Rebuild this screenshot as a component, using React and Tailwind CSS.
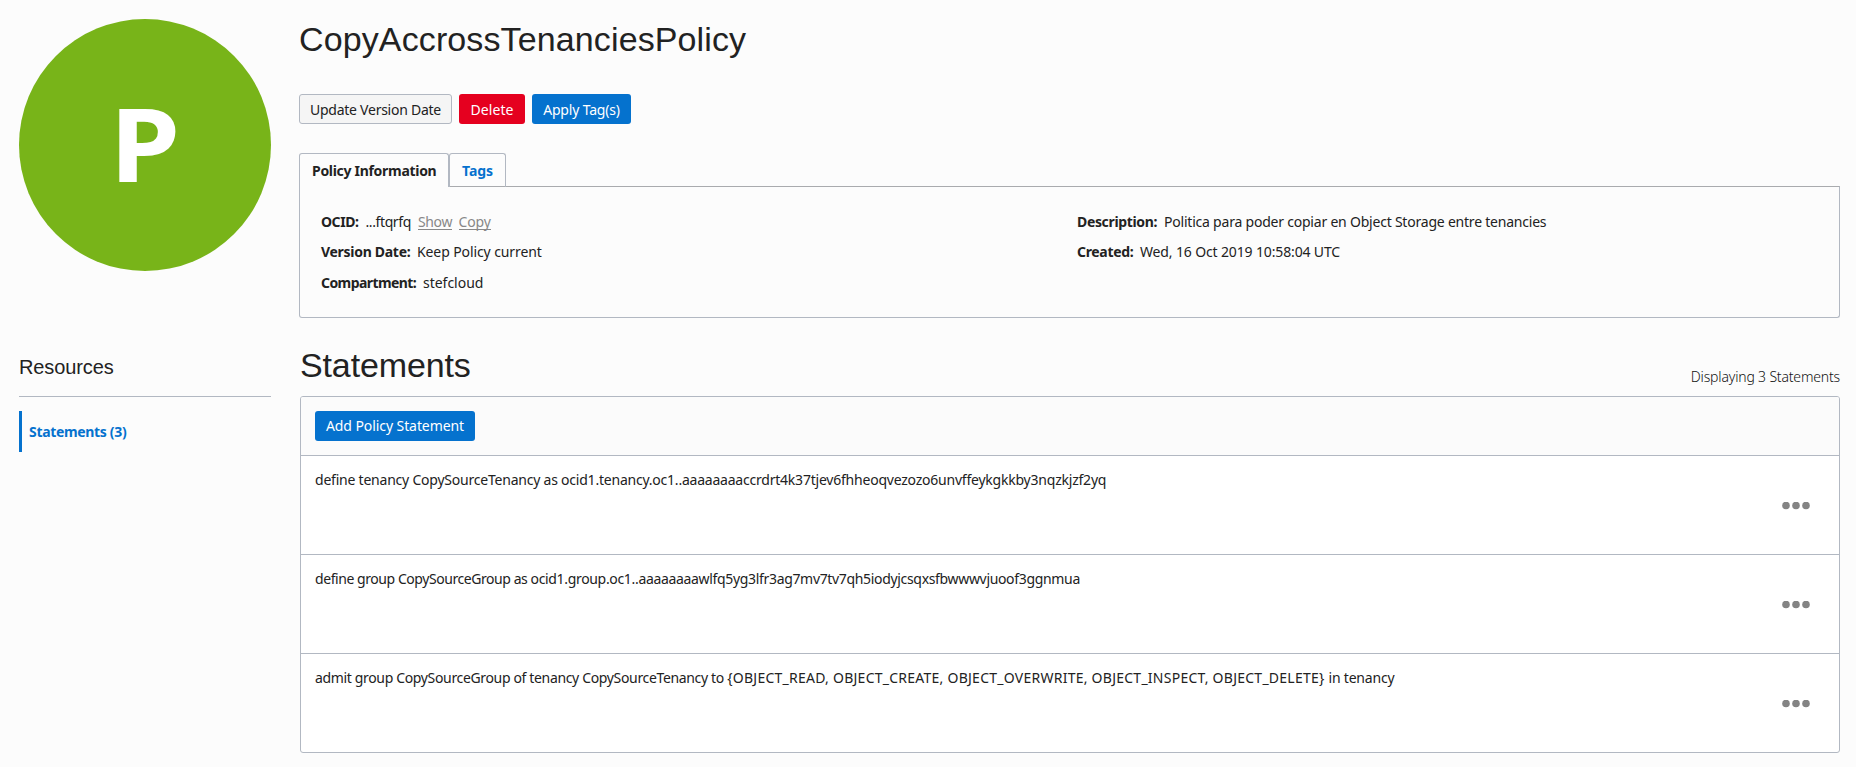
const statements = [
  [
    {
      text: 'define tenancy CopySourceTenancy as ocid1.tenancy.oc1..aaaaaaaaccrdrt4k37tjev6fhheoqvezozo6unvffeykgkkby3nqzkjzf2yq',
      tracking: 'tracking-[-0.22px]',
    },
  ],
  [
    { text: 'define group CopySourceGroup as ', tracking: 'tracking-[-0.44px]' },
    {
      text: 'ocid1.group.oc1..aaaaaaaawlfq5yg3lfr3ag7mv7tv7qh5iodyjcsqxsfbwwwvjuoof3ggnmua',
      tracking: 'tracking-[-0.33px]',
    },
  ],
  [
    { text: 'admit group CopySourceGroup of tenancy CopySourceTenancy to ', tracking: 'tracking-[-0.345px]' },
    {
      text: '{OBJECT_READ, OBJECT_CREATE, OBJECT_OVERWRITE, OBJECT_INSPECT, OBJECT_DELETE} ',
      tracking: 'tracking-[0.25px]',
    },
    { text: 'in tenancy', tracking: 'tracking-[-0.2px]' },
  ],
];

function Button({ className, children }) {
  return (
    <button type="button" className={`h-[30px] rounded-[3px] text-center whitespace-nowrap ${className}`}>
      {children}
    </button>
  );
}

function Field({ label, labelClass, value, valueClass, children }) {
  return (
    <div className="flex leading-5 whitespace-nowrap">
      <span className={`shrink-0 font-bold ${labelClass}`}>{label}</span>
      <span className={`shrink-0 ${valueClass}`}>{value}</span>
      {children}
    </div>
  );
}

function MoreIcon() {
  return (
    <svg width="28" height="8" viewBox="0 0 28 8" fill="#848484" aria-hidden="true">
      <circle cx="4" cy="3.5" r="3.8" />
      <circle cx="14" cy="3.5" r="3.8" />
      <circle cx="24" cy="3.5" r="3.8" />
    </svg>
  );
}

export default function App() {
  return (
    <div className="flex h-[767px] w-[1856px] gap-7 overflow-hidden bg-[#fcfcfc] px-[19px] font-['Noto_Sans','Open_Sans',sans-serif] text-sm text-[#222]">
      <aside className="w-[252px] shrink-0 pt-[19px]">
        <div className="flex size-[252px] items-center justify-center rounded-full bg-[#78b419] pb-[6px] text-[103px] leading-none font-bold text-white">
          <span className="scale-x-110">P</span>
        </div>
        <h2 className="mt-[84px] h-[42px] border-b border-[#b2b8c2] font-['Liberation_Sans',Arial,sans-serif] text-[20px] leading-[24px] tracking-[-0.1px]">
          Resources
        </h2>
        <nav className="mt-[14px]">
          <a className="block h-[41px] border-l-3 border-[#0572ce] pl-[7px] leading-[41px] font-bold tracking-[-0.33px] text-[#0572ce]">
            Statements (3)
          </a>
        </nav>
      </aside>

      <main className="w-[1541px] shrink-0">
        <h1 className="h-[94px] pt-5 font-['Liberation_Sans',Arial,sans-serif] text-[34px] leading-[38px] tracking-[0.12px]">
          CopyAccrossTenanciesPolicy
        </h1>

        <div className="flex gap-[7px]">
          <Button className="w-[153px] border border-[#b2b8c2] bg-[#f5f5f5] leading-[30px] tracking-[-0.25px]">Update Version Date</Button>
          <Button className="w-[66px] bg-[#e5001f] pt-px leading-[29px] tracking-[0.1px] text-white">Delete</Button>
          <Button className="w-[99px] bg-[#0572ce] pt-px leading-[29px] tracking-[-0.18px] text-white">Apply Tag(s)</Button>
        </div>

        <div className="mt-[29px] flex h-[34px] leading-[33px] font-bold">
          <div className="z-10 w-[150px] rounded-t-[3px] border border-b-0 border-[#b2b8c2] bg-[#fcfcfc] pl-[12px] tracking-[-0.3px]">
            Policy Information
          </div>
          <div className="w-[57px] rounded-t-[3px] border border-b-0 border-[#b2b8c2] pl-[12px] tracking-[-0.05px] text-[#0572ce]">
            Tags
          </div>
        </div>
        <section className="-mt-px flex h-[132px] rounded-b-[3px] border border-[#b2b8c2] border-t-[#a9abae] pt-[25px] pl-[21px]">
          <div className="flex w-[756px] flex-col gap-[10.4px]">
            <Field label="OCID:" labelClass="w-[44.5px] tracking-[-0.45px]" value="...ftqrfq" valueClass="w-[52.5px] tracking-[-0.4px]">
              <a className="mr-[6.5px] h-[18px] border-b border-[#888] tracking-[-0.38px] text-[#888]">Show</a>
              <a className="h-[18px] border-b border-[#888] tracking-[-0.15px] text-[#888]">Copy</a>
            </Field>
            <Field label="Version Date:" labelClass="w-[96px] tracking-[-0.29px]" value="Keep Policy current" valueClass="tracking-[-0.1px]" />
            <Field label="Compartment:" labelClass="w-[102px] tracking-[-0.57px]" value="stefcloud" valueClass="tracking-[-0.02px]" />
          </div>
          <div className="flex flex-col gap-[10.4px]">
            <Field
              label="Description:"
              labelClass="w-[87px] tracking-[-0.34px]"
              value="Politica para poder copiar en Object Storage entre tenancies"
              valueClass="tracking-[-0.215px]"
            />
            <Field label="Created:" labelClass="w-[63px] tracking-[-0.32px]" value="Wed, 16 Oct 2019 10:58:04 UTC" valueClass="tracking-[-0.14px]" />
          </div>
        </section>

        <div className="ml-px flex h-[78px] items-start justify-between">
          <h2 className="pt-[28px] font-['Liberation_Sans',Arial,sans-serif] text-[34px] leading-[38px] tracking-[-0.13px]">Statements</h2>
          <span className="pt-[49px] leading-5 font-light tracking-[-0.17px] text-[#111]">Displaying 3 Statements</span>
        </div>

        <section className="ml-px overflow-hidden rounded-[3px] border border-[#b2b8c2] bg-white">
          <div className="h-[58px] bg-[#fbfbfb] pt-[14px] pl-[14px]">
            <Button className="w-[160px] bg-[#0572ce] leading-[30px] tracking-[-0.08px] text-white">Add Policy Statement</Button>
          </div>
          {statements.map((parts) => (
            <div key={parts[0].text} className="flex h-[99px] justify-between border-t border-[#b2b8c2] pt-[14px] pr-[29px] pl-[14px]">
              <p className="leading-5 whitespace-pre">
                {parts.map((part) => (
                  <span key={part.text} className={part.tracking}>
                    {part.text}
                  </span>
                ))}
              </p>
              <button type="button" className="mt-[32px] h-2">
                <MoreIcon />
              </button>
            </div>
          ))}
        </section>
      </main>
    </div>
  );
}
